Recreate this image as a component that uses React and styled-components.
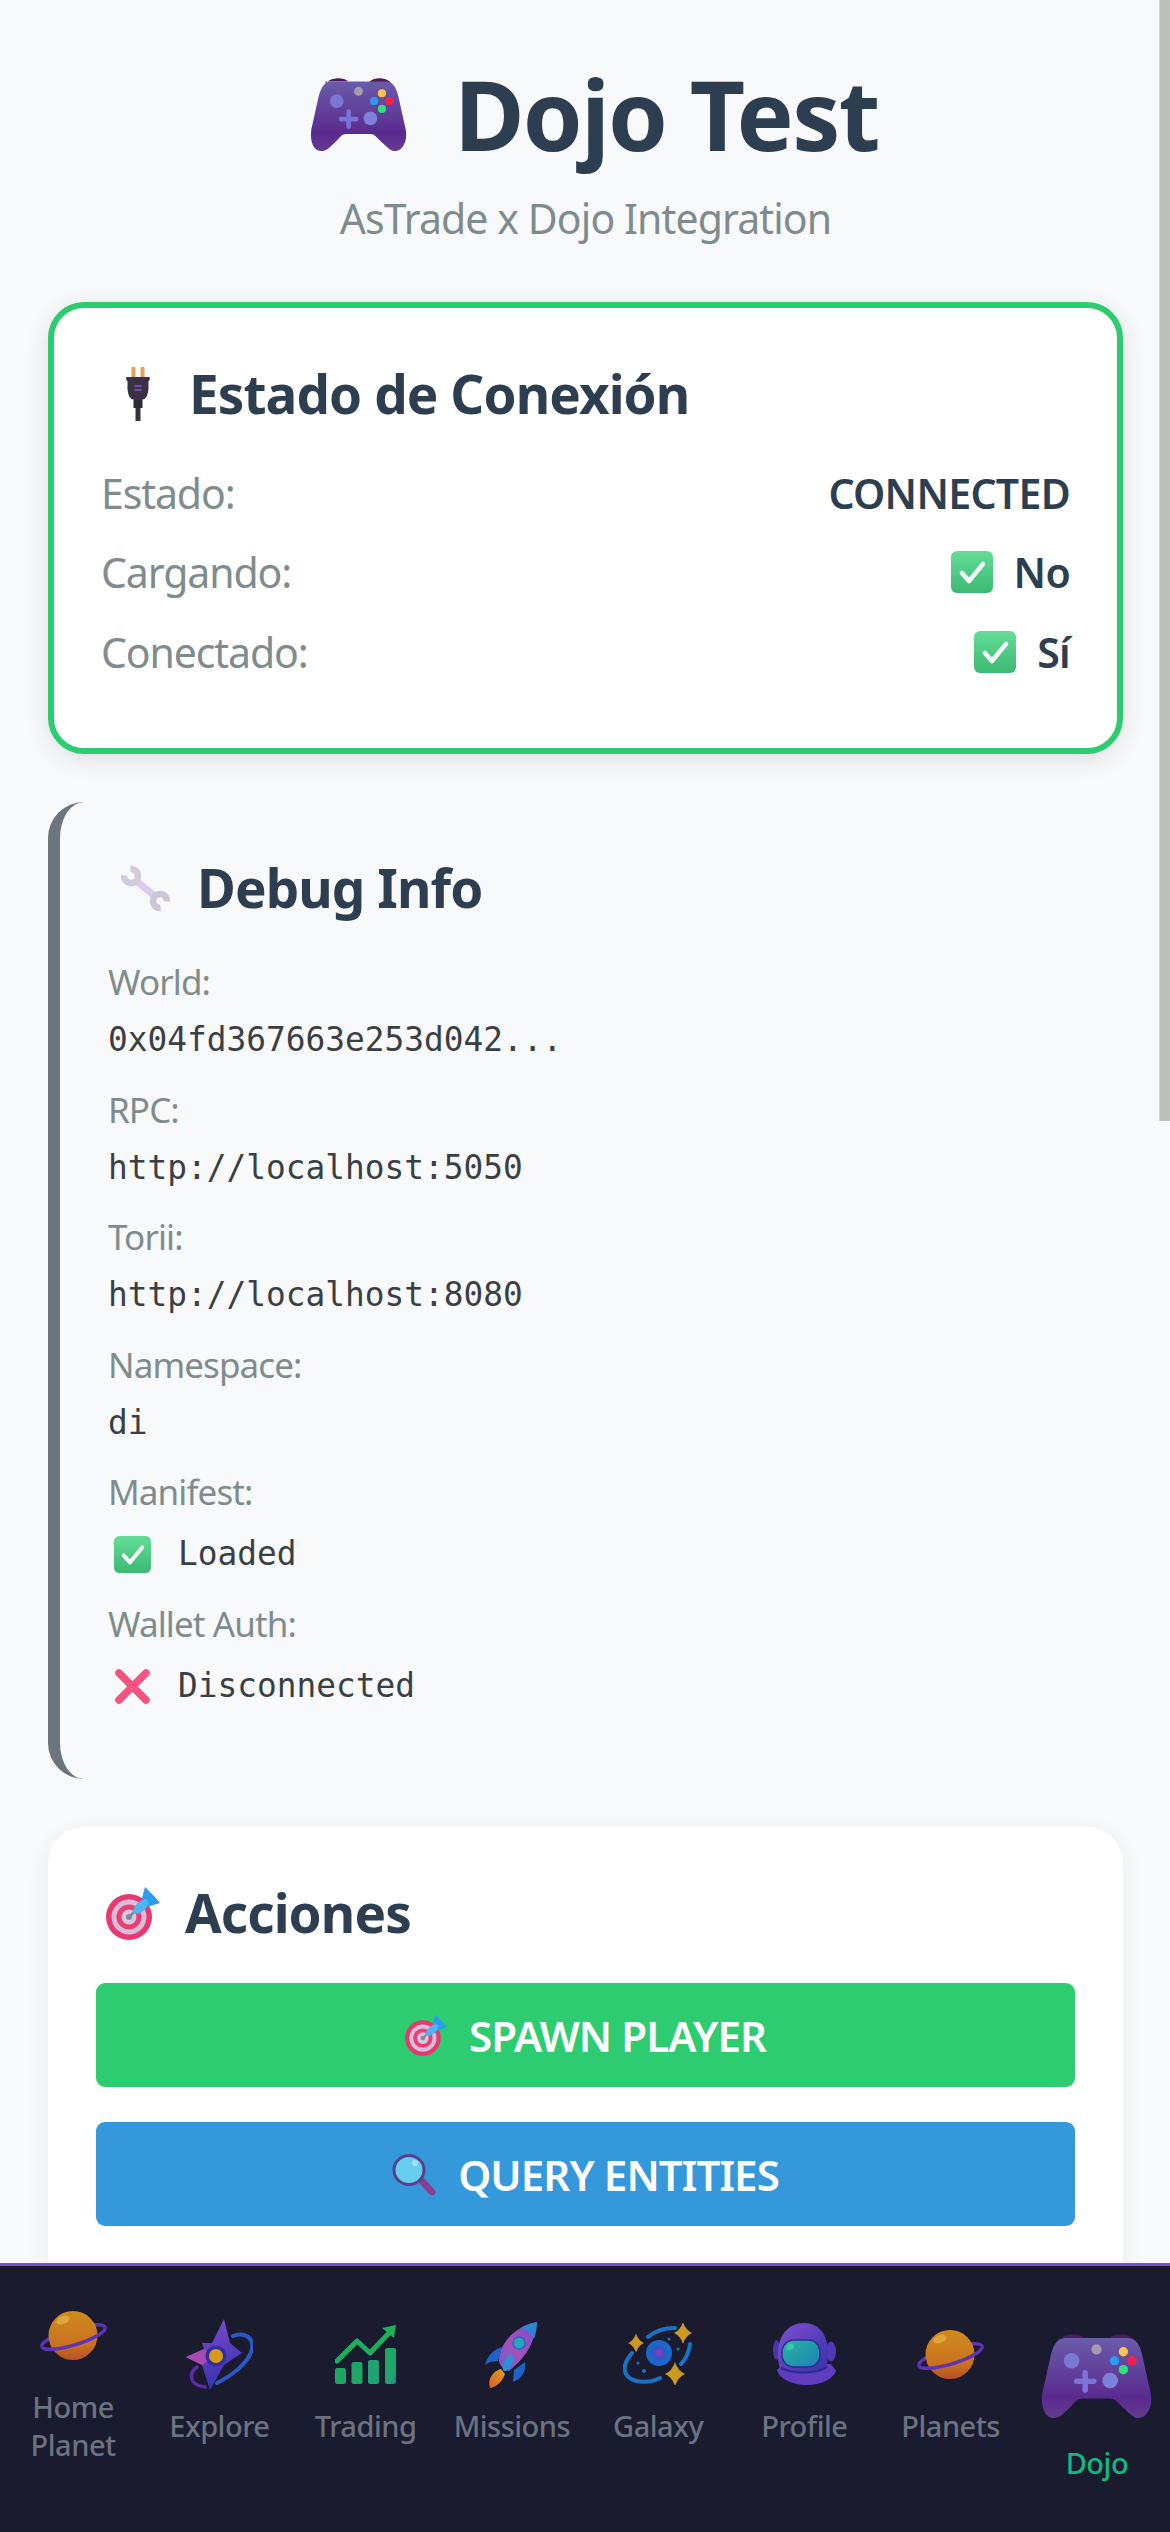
import React from "react";
import styled, { createGlobalStyle } from "styled-components";

const Global = createGlobalStyle`
  html, body { margin: 0; padding: 0; height: 100%; overflow: hidden; background: #f8f9fa; }
  * { box-sizing: border-box; }
  #root { height: 100%; }
`;
const sans = `"Noto Sans", "Open Sans", sans-serif`;

const Page = styled.main`
  height: 2532px; overflow: hidden; padding: 0 47px 0 48px; background: #f8f9fa; font-family: ${sans};
`;
const Header = styled.header`
  padding-top: 56px; height: 302px; text-align: center;
`;
const TitleRow = styled.div`
  display: flex; align-items: center; justify-content: center; gap: 47px; padding-left: 18px; height: 116px;
`;
const Title = styled.h1`
  margin: 0; font-size: 96px; line-height: 116px; font-weight: 700; color: #2c3e50; letter-spacing: -1.7px;
`;
const Subtitle = styled.p`
  margin: 0; font-size: 41px; line-height: 60px; color: #7f8c8d; letter-spacing: -0.9px; padding-top: 16px;
`;
const Card = styled.section`
  margin-bottom: 48px; border-radius: 36px; background: #fff; padding: 48px;
  box-shadow: 0 6px 24px rgba(0,0,0,.06);
`;
const StatusCard = styled(Card)`
  height: 452px; border: 6px solid #2ecc71; padding: 48px 47px; box-shadow: 0 6px 24px rgba(0,0,0,.1);
`;
const DebugCard = styled(Card)`
  height: 977px; background: #f8f9fa; border-left: 12px solid #6c757d; box-shadow: none;
`;
const ActionsCard = styled(Card)`
  min-height: 800px;
`;
const CardTitle = styled.h2`
  display: flex; align-items: center; margin: 0; height: 78px; padding-bottom: 3px; font-size: 53px; line-height: 74px; font-weight: 700;
  color: #2c3e50; letter-spacing: -0.9px;
`;
const TitleIcon = styled.span`
  display: flex; margin-left: ${p => p.$left}px; margin-right: ${p => p.$right}px;
`;
const Rows = styled.div`
  margin-top: 19px; display: flex; flex-direction: column;
`;
const Row = styled.div`
  display: flex; align-items: center; justify-content: space-between; height: 79.5px; font-size: 41px;
`;
const RowLabel = styled.span`
  color: #7f8c8d; letter-spacing: -1.1px;
`;
const RowValue = styled.span`
  display: flex; align-items: center; gap: 21px; color: #2c3e50; font-weight: 600; letter-spacing: -0.7px;
`;
const InfoList = styled.div`
  margin-top: 31px; display: flex; flex-direction: column; gap: 23.5px;
`;
const InfoItem = styled.div`
  display: flex; flex-direction: column; gap: 14px;
`;
const InfoLabel = styled.span`
  font-size: 35px; line-height: 45px; color: #7f8c8d; letter-spacing: -0.9px;
`;
const InfoValue = styled.span`
  display: flex; align-items: center; gap: 27px; height: 45px;
  margin-top: ${p => (p.$icon ? 4 : 0)}px; padding-left: ${p => (p.$icon ? 6 : 0)}px;
  font-family: "DejaVu Sans Mono", monospace; font-size: 32.8px; line-height: 45px; color: #3a3f44;
`;
const Buttons = styled.div`
  margin-top: 30px; display: flex; flex-direction: column; gap: 35px;
`;
const ActionButton = styled.button`
  display: flex; align-items: center; justify-content: center; gap: 22px; width: 979px; height: 104px; border: 0;
  border-radius: 9px; background: ${p => p.$bg}; color: #fff; font-family: ${sans}; font-size: 42px; font-weight: 600;
  letter-spacing: -0.9px; padding: 0;
`;
const Nav = styled.nav`
  position: fixed; left: 0; right: 0; bottom: 0; height: 269px; z-index: 2; display: flex; font-family: ${sans};
  background: #1a1b2e; border-top: 3px solid #7a4fd6; padding-bottom: 35px;
`;
const Tab = styled.div`
  flex: 1 1 0; min-width: 0; display: flex; flex-direction: column; align-items: center; justify-content: center; gap: 17px;
`;
const TabIcon = styled.span`
  display: flex; align-items: ${p => (p.$active ? "flex-end" : "center")}; justify-content: center;
  height: ${p => (p.$active ? 146 : 72)}px; padding-bottom: ${p => (p.$active ? 9 : 0)}px;
`;
const TabLabel = styled.span`
  font-size: 29px; line-height: 38px; font-weight: 500; text-align: center; letter-spacing: -0.5px; width: 130px;
  color: ${p => (p.$active ? "#10b981" : "#6b7280")};
`;
const ScrollThumb = styled.div`
  position: fixed; top: 0; right: 0; width: 11px; height: 1121px; background: #bdbfbd; border-left: 1px solid #d3d5d4; z-index: 1;
`;

const Controller = ({ w = 97, h = 74 }) => (
  <svg width={w} height={h} viewBox="0 0 284 218" aria-hidden="true">
    <defs>
      <linearGradient id="ctl" x1="0" y1="0" x2="0" y2="1">
        <stop offset="0" stopColor="#6a5ba9" /><stop offset=".75" stopColor="#5a2a8e" /><stop offset="1" stopColor="#643b90" />
      </linearGradient>
    </defs>
    <path d="M45 20C55 2 95-3 112 13H45ZM175 13C192-3 230 2 240 20H175Z" fill="#4a1c5e" />
    <path d="M62 13H222C245 13 255 35 260 60L281 155C288 195 268 218 250 218C235 218 225 205 190 172Q185 168 175 168H108Q98 168 92 172C60 205 50 218 32 218C12 218-2 195 3 155L24 60C30 35 40 13 62 13Z" fill="url(#ctl)" />
    <circle cx="78" cy="71" r="20" fill="#7a78d0" />
    <circle cx="142" cy="42" r="13" fill="#a89cac" />
    <circle cx="211" cy="48" r="12" fill="#fcc44e" />
    <circle cx="188" cy="71" r="12" fill="#2b9cf2" />
    <circle cx="233" cy="71" r="12" fill="#f5214f" />
    <circle cx="211" cy="94" r="12" fill="#2ee27a" />
    <path d="M113 102V146M91 124H135" stroke="#7b74d6" strokeWidth="14" strokeLinecap="round" />
    <circle cx="177" cy="122" r="20" fill="#7d82d6" />
  </svg>
);
const Plug = () => (
  <svg width="26" height="54" viewBox="0 0 25 54" aria-hidden="true">
    <rect x="6" y="0" width="4" height="11" rx="1" fill="#e0a060" />
    <rect x="15" y="0" width="4" height="11" rx="1" fill="#e0a060" />
    <path d="M1 10H24Q25 13 23 14V22Q22 33 16 33H9Q3 33 2 22V14Q0 13 1 10Z" fill="#393046" />
    <path d="M9 19H16M9 23H16" stroke="#8a5ad8" strokeWidth="1.6" />
    <rect x="8" y="33" width="9" height="8" fill="#2c2a38" />
    <rect x="10" y="41" width="5" height="13" fill="#34343e" />
  </svg>
);
const Wrench = () => (
  <svg width="49" height="48" viewBox="0 0 49 48" aria-hidden="true">
    <path d="M14 16L35 33" stroke="#d9ccf0" strokeWidth="7" />
    <path d="M9.400 5A7 7 0 1 1 3 11.400" fill="none" stroke="#d2cbdc" strokeWidth="6.500" />
    <path d="M39.600 44A7 7 0 1 1 46 37.600" fill="none" stroke="#cdc6d8" strokeWidth="6.500" />
  </svg>
);
const Target = ({ s = 54 }) => (
  <svg width={s} height={s} viewBox="0 0 54 54" aria-hidden="true">
    <circle cx="23" cy="31" r="23" fill="#e5396f" />
    <circle cx="23" cy="31" r="17.500" fill="#dcbcd8" />
    <circle cx="23" cy="31" r="12.500" fill="#ea3f74" />
    <circle cx="23" cy="31" r="7.500" fill="#d6c8de" />
    <circle cx="23" cy="31" r="3" fill="#8f8496" />
    <path d="M23 31L32 22" stroke="#7d8a98" strokeWidth="2.500" />
    <path d="M36 12L39 1L47 9L54 17L41 21Z" fill="#2d9cf0" />
    <ellipse cx="35" cy="20.500" rx="9.500" ry="4.800" transform="rotate(-42 35 20.500)" fill="#4cb6f2" />
  </svg>
);
const Magnifier = () => (
  <svg width="44" height="41" viewBox="0 0 44 41" aria-hidden="true">
    <path d="M30 27L40 38" stroke="#8a3f90" strokeWidth="7" strokeLinecap="round" />
    <ellipse cx="17" cy="16" rx="15" ry="14.500" fill="#67cfee" stroke="#5a3f90" strokeWidth="3" />
    <circle cx="23" cy="9" r="3" fill="#a5e6f6" />
  </svg>
);
const Check = ({ s = 42 }) => (
  <svg width={s} height={s} viewBox="0 0 42 42" aria-hidden="true">
    <defs>
      <linearGradient id="chk" x1="0" y1="0" x2="0" y2="1">
        <stop offset="0" stopColor="#62de98" /><stop offset="1" stopColor="#3db873" />
      </linearGradient>
    </defs>
    <rect width="42" height="42" rx="6" fill="url(#chk)" />
    <path d="M11 22L18 30L32 13" fill="none" stroke="#f4fbf6" strokeWidth="4.500" strokeLinecap="round" strokeLinejoin="round" />
  </svg>
);
const Cross = () => (
  <svg width="37" height="37" viewBox="0 0 37 37" aria-hidden="true">
    <path d="M5 5L32 32M32 5L5 32" stroke="#f4527f" strokeWidth="7.500" strokeLinecap="round" />
  </svg>
);
const Planet = () => (
  <svg width="69" height="49" viewBox="0 0 69 49" aria-hidden="true">
    <defs>
      <linearGradient id="pl" x1="0" y1="0" x2="0" y2="1">
        <stop offset="0" stopColor="#d08a1c" /><stop offset=".7" stopColor="#c9721f" /><stop offset="1" stopColor="#b84f28" />
      </linearGradient>
    </defs>
    <g transform="translate(34.500 26) rotate(-17)">
      <path d="M-33 0A33 8 0 0 1 33 0" fill="none" stroke="#5f33b8" strokeWidth="3.500" />
    </g>
    <ellipse cx="34" cy="24.500" rx="24.500" ry="24.500" fill="url(#pl)" />
    <ellipse cx="24" cy="9" rx="7" ry="4" fill="#e2a53c" transform="rotate(-20 24 9)" />
    <g transform="translate(34.500 26) rotate(-17)">
      <path d="M-33 0A33 8 0 0 0 33 0" fill="none" stroke="#5f33b8" strokeWidth="3.500" />
    </g>
  </svg>
);
const Compass = () => (
  <svg width="67" height="71" viewBox="0 0 67 71" aria-hidden="true">
    <defs>
      <linearGradient id="cp" x1="0" y1="0" x2=".3" y2="1">
        <stop offset="0" stopColor="#8a50c8" /><stop offset=".5" stopColor="#6040c0" /><stop offset="1" stopColor="#3534b0" />
      </linearGradient>
    </defs>
    <path d="M47 17C58 13 68 18 66 30C63 44 45 57 31 64" fill="none" stroke="#2b57c8" strokeWidth="4" strokeLinecap="round" />
    <path d="M11 48C3 54 2 66 19 68" fill="none" stroke="#5a2fa8" strokeWidth="3.500" strokeLinecap="round" />
    <path d="M38 0L44 24L56 34L38 46L24 71L16 46L0 38L18 30L16 24L26 24Z" fill="url(#cp)" />
    <path d="M0 38L18 30L30 37L16 46Z" fill="#a84ab0" />
    <circle cx="30" cy="37" r="10.500" fill="#372c9c" />
    <circle cx="30" cy="37" r="7" fill="#d99a1c" />
  </svg>
);
const Chart = () => (
  <svg width="61" height="59" viewBox="0 0 61 59" aria-hidden="true">
    <defs>
      <linearGradient id="ch" x1="0" y1="0" x2="1" y2="1">
        <stop offset="0" stopColor="#1fa85e" /><stop offset=".7" stopColor="#1fa574" /><stop offset="1" stopColor="#1f7fa0" />
      </linearGradient>
    </defs>
    <rect x="0" y="43" width="11" height="16" rx="2" fill="#1fa563" />
    <rect x="16.500" y="37" width="11" height="22" rx="2" fill="#1fa565" />
    <rect x="33" y="35" width="11" height="24" rx="2" fill="#1fa272" />
    <rect x="50" y="23" width="11" height="36" rx="2" fill="url(#ch)" />
    <path d="M2 36L22 16L35 28L54 8" fill="none" stroke="#1fae5c" strokeWidth="5" strokeLinecap="round" strokeLinejoin="round" />
    <path d="M47 3L61 0L59 13Z" fill="#1fae5c" />
  </svg>
);
const Rocket = () => (
  <svg width="53" height="67" viewBox="0 0 53 67" aria-hidden="true">
    <defs>
      <linearGradient id="rk" x1="1" y1="0" x2="0" y2="1">
        <stop offset="0" stopColor="#6d4fd0" /><stop offset=".55" stopColor="#a84fb8" /><stop offset="1" stopColor="#6a5fd0" />
      </linearGradient>
      <linearGradient id="fl" x1="1" y1="0" x2="0" y2="1">
        <stop offset="0" stopColor="#e6a020" /><stop offset="1" stopColor="#d9601f" />
      </linearGradient>
    </defs>
    <path d="M0 44C2 35 9 28 17 26L13 40L5 41ZM28 61C36 58 42 50 40 41L29 49Z" fill="#1e62c8" />
    <path d="M5 67C2 58 8 50 16 48L20 53C17 61 11 66 5 67Z" fill="url(#fl)" />
    <path d="M52 1C50 18 44 34 24 50Q15 47 14 40C14 26 24 14 34 8C40 4 46 2 52 1Z" fill="url(#rk)" />
    <path d="M52 1C46 2 40 4 36 7C42 9 47 13 49 18C51 12 52 7 52 1Z" fill="#2a86d0" />
    <circle cx="34" cy="22" r="6" fill="#2aa5b5" stroke="#2567c8" strokeWidth="1.500" />
    <ellipse cx="23" cy="42" rx="4" ry="9" fill="#2d8fd0" transform="rotate(25 23 42)" />
  </svg>
);
const Spark = ({ x, y, r }) => (
  <path d={`M${x} ${y - r * 1.2}Q${x + r * 0.3} ${y - r * 0.3} ${x + r} ${y}Q${x + r * 0.3} ${y + r * 0.3} ${x} ${y + r * 1.2}Q${x - r * 0.3} ${y + r * 0.3} ${x - r} ${y}Q${x - r * 0.3} ${y - r * 0.3} ${x} ${y - r * 1.2}Z`} fill="#cc9a22" />
);
const Galaxy = () => (
  <svg width="70" height="62" viewBox="0 0 70 62" aria-hidden="true">
    <g fill="none" stroke="#1a72c4" strokeWidth="4" strokeLinecap="round">
      <path d="M25 14C32 8 42 5 52 5" />
      <path d="M9 30C3 37 0 45 3 51C8 60 26 61 37 55" />
      <path d="M67 21C66 29 63 36 58 41" />
    </g>
    <circle cx="36" cy="30" r="13" fill="#1c68c8" />
    <ellipse cx="36" cy="30" rx="7" ry="7.500" fill="#3c52c4" />
    <circle cx="36" cy="30" r="3.500" fill="#7a3fc0" />
    <circle cx="46" cy="16" r="1.500" fill="#1a72c4" />
    <circle cx="55" cy="26" r="1.500" fill="#1a72c4" />
    <circle cx="15" cy="40" r="1.500" fill="#1a72c4" />
    <circle cx="21" cy="48" r="2" fill="#1a72c4" />
    <Spark x={13} y={20} r={8} />
    <Spark x={60} y={10} r={9} />
    <Spark x={52} y={51} r={10} />
  </svg>
);
const Astronaut = () => (
  <svg width="63" height="62" viewBox="0 0 63 62" aria-hidden="true">
    <defs>
      <linearGradient id="hm" x1="0" y1="0" x2="1" y2="1">
        <stop offset="0" stopColor="#7f50d2" /><stop offset="1" stopColor="#3730a8" />
      </linearGradient>
      <linearGradient id="vs" x1="0" y1="0" x2="1" y2="1">
        <stop offset="0" stopColor="#2ab59f" /><stop offset="1" stopColor="#1c80b8" />
      </linearGradient>
    </defs>
    <path d="M4 47C6 56 20 62 34 62C48 62 60 56 63 48L58 41L8 43Z" fill="#5f3cc0" />
    <ellipse cx="3.500" cy="27" rx="3.500" ry="10" fill="#4b36ac" />
    <ellipse cx="58" cy="28.500" rx="5" ry="10" fill="#5038b8" />
    <path d="M5 30C5 12 16 0 31 0C46 0 55 12 55 30C55 40 54 46 50 48C40 52 20 52 10 48C6 46 5 40 5 30Z" fill="url(#hm)" />
    <path d="M8 45C20 51 42 51 54 44" fill="none" stroke="#2d2a90" strokeWidth="2" />
    <rect x="9" y="17" width="38" height="27" rx="12" fill="url(#vs)" stroke="#2d2a90" strokeWidth="1.500" />
    <ellipse cx="17" cy="24" rx="4" ry="3" fill="#3fc4b0" transform="rotate(-30 17 24)" />
  </svg>
);

const tabs = [
  ["Home Planet", <Planet />], ["Explore", <Compass />], ["Trading", <Chart />], ["Missions", <Rocket />],
  ["Galaxy", <Galaxy />], ["Profile", <Astronaut />], ["Planets", <Planet />],
];
const info = [
  ["World:", "0x04fd367663e253d042..."], ["RPC:", "http://localhost:5050"], ["Torii:", "http://localhost:8080"], ["Namespace:", "di"],
];

export default function App() {
  return (
    <>
      <Global />
      <Page>
        <Header>
          <TitleRow><Controller /><Title>Dojo Test</Title></TitleRow>
          <Subtitle>AsTrade x Dojo Integration</Subtitle>
        </Header>
        <StatusCard>
          <CardTitle><TitleIcon $left={24} $right={38}><Plug /></TitleIcon>Estado de Conexión</CardTitle>
          <Rows>
            <Row><RowLabel>Estado:</RowLabel><RowValue>CONNECTED</RowValue></Row>
            <Row><RowLabel>Cargando:</RowLabel><RowValue><Check />No</RowValue></Row>
            <Row><RowLabel>Conectado:</RowLabel><RowValue><Check />Sí</RowValue></Row>
          </Rows>
        </StatusCard>
        <DebugCard>
          <CardTitle><TitleIcon $left={13} $right={27}><Wrench /></TitleIcon>Debug Info</CardTitle>
          <InfoList>
            {info.map(([k, v]) => (
              <InfoItem key={k}><InfoLabel>{k}</InfoLabel><InfoValue>{v}</InfoValue></InfoItem>
            ))}
            <InfoItem><InfoLabel>Manifest:</InfoLabel><InfoValue $icon><Check s={37} />Loaded</InfoValue></InfoItem>
            <InfoItem><InfoLabel>Wallet Auth:</InfoLabel><InfoValue $icon><Cross />Disconnected</InfoValue></InfoItem>
          </InfoList>
        </DebugCard>
        <ActionsCard>
          <CardTitle><TitleIcon $left={10} $right={25}><Target /></TitleIcon>Acciones</CardTitle>
          <Buttons>
            <ActionButton $bg="#2ecc71"><Target s={42} />SPAWN PLAYER</ActionButton>
            <ActionButton $bg="#3498db"><Magnifier />QUERY ENTITIES</ActionButton>
          </Buttons>
        </ActionsCard>
      </Page>
      <ScrollThumb />
      <Nav>
        {tabs.map(([label, icon]) => (
          <Tab key={label}><TabIcon>{icon}</TabIcon><TabLabel>{label}</TabLabel></Tab>
        ))}
        <Tab><TabIcon $active><Controller w={111} h={85} /></TabIcon><TabLabel $active>Dojo</TabLabel></Tab>
      </Nav>
    </>
  );
}
